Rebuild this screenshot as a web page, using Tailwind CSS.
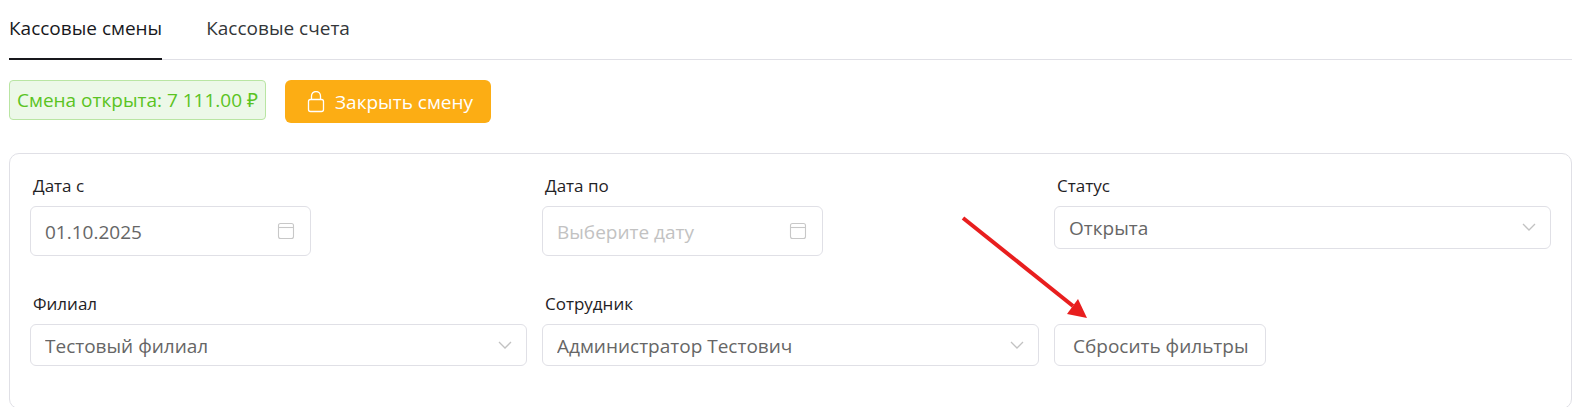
<!DOCTYPE html>
<html lang="ru">
<head>
<meta charset="utf-8">
<meta name="viewport" content="width=device-width, initial-scale=1">
<title>Кассовые смены</title>
<script src="https://cdn.jsdelivr.net/npm/@tailwindcss/browser@4"></script>
</head>
<body class="bg-white font-['Open_Sans','Noto_Sans',sans-serif] text-[19px] text-[#666]">
<main class="relative pl-[9px] pr-1.5">
  <nav class="flex h-[60px] gap-11 border-b border-[#e0e0e6]">
    <a href="#shifts" aria-current="page" class="-mb-px flex h-[60px] items-center border-b-2 border-[#18181c] pb-0.5 text-[#18181c]">Кассовые смены</a>
    <a href="#accounts" class="flex items-center pb-0.5 text-[#333639]">Кассовые счета</a>
  </nav>

  <div class="mt-5 flex items-start gap-[19px]">
    <div class="flex h-10 items-center rounded border border-[#b9e5a3] bg-[#ecf8e8] px-[7px] text-[#5ac322]">Смена открыта: 7 111.00 ₽</div>
    <button type="button" class="flex h-[43px] items-center gap-2.5 rounded-md bg-[#fcad14] pl-5 pr-[18px] pt-0.5 text-white">
      <svg class="h-6 w-5" viewBox="0 0 20 24" fill="none" stroke="currentColor" stroke-width="1.3"><rect x="3.5" y="8.5" width="15" height="12" rx="2"/><path d="M6.5 8.5V5a4.5 4.5 0 0 1 9 0v3.500"/></svg>
      Закрыть смену
    </button>
  </div>

  <form class="mt-[30px] grid min-h-64 grid-cols-3 content-start gap-x-[15px] rounded-[10px] border border-[#e0e0e6] px-5 pt-5">
    <div class="flex h-[118px] flex-col">
      <label for="from" class="h-8 pl-[3px] text-[17px] leading-6 text-[#1f2225]">Дата с</label>
      <div class="flex h-[50px] w-[281px] items-center rounded-md border border-[#e0e0e6] px-3.5">
        <input id="from" type="text" value="01.10.2025" class="min-w-0 flex-1 pt-0.5 outline-none">
        <svg class="size-5" viewBox="0 0 20 20" fill="none" stroke="#c8c8c8" stroke-width="1.1"><rect x="2.500" y="2.500" width="15" height="15" rx="2"/><path d="M2.500 6.500h15"/></svg>
      </div>
    </div>
    <div class="flex h-[118px] flex-col">
      <label for="to" class="h-8 pl-[3px] text-[17px] leading-6 text-[#1f2225]">Дата по</label>
      <div class="flex h-[50px] w-[281px] items-center rounded-md border border-[#e0e0e6] px-3.5">
        <input id="to" type="text" placeholder="Выберите дату" class="min-w-0 flex-1 pt-0.5 outline-none placeholder:text-[#c2c2c2]">
        <svg class="size-5" viewBox="0 0 20 20" fill="none" stroke="#c8c8c8" stroke-width="1.1"><rect x="2.500" y="2.500" width="15" height="15" rx="2"/><path d="M2.500 6.500h15"/></svg>
      </div>
    </div>
    <div class="flex h-[118px] flex-col">
      <label for="status" class="h-8 pl-[3px] text-[17px] leading-6 text-[#1f2225]">Статус</label>
      <div class="relative">
        <select id="status" class="h-[43px] w-full appearance-none rounded-md border border-[#e0e0e6] bg-white px-3.5 pt-0.5"><option>Открыта</option></select>
        <svg class="pointer-events-none absolute right-3.5 top-[13px] size-4" viewBox="0 0 16 16" fill="none" stroke="#c2c2c2" stroke-width="1.3"><path d="M2 5l6 6 6-6"/></svg>
      </div>
    </div>
    <div class="flex flex-col">
      <label for="branch" class="h-8 pl-[3px] text-[17px] leading-6 text-[#1f2225]">Филиал</label>
      <div class="relative">
        <select id="branch" class="h-[42px] w-full appearance-none rounded-md border border-[#e0e0e6] bg-white px-3.5 pt-0.5"><option>Тестовый филиал</option></select>
        <svg class="pointer-events-none absolute right-3.5 top-[13px] size-4" viewBox="0 0 16 16" fill="none" stroke="#c2c2c2" stroke-width="1.3"><path d="M2 5l6 6 6-6"/></svg>
      </div>
    </div>
    <div class="flex flex-col">
      <label for="employee" class="h-8 pl-[3px] text-[17px] leading-6 text-[#1f2225]">Сотрудник</label>
      <div class="relative">
        <select id="employee" class="h-[42px] w-full appearance-none rounded-md border border-[#e0e0e6] bg-white px-3.5 pt-0.5"><option>Администратор Тестович</option></select>
        <svg class="pointer-events-none absolute right-3.5 top-[13px] size-4" viewBox="0 0 16 16" fill="none" stroke="#c2c2c2" stroke-width="1.3"><path d="M2 5l6 6 6-6"/></svg>
      </div>
    </div>
    <div class="pt-8">
      <button type="reset" class="flex h-[42px] items-center rounded-md border border-[#e0e0e6] pl-[18px] pr-4 pt-0.5">Сбросить фильтры</button>
    </div>
  </form>

  <!-- Pointer to the reset button -->
  <svg class="pointer-events-none absolute left-[960px] top-[214px] h-[106px] w-[130px]" viewBox="0 0 130 106"><path d="M3 4L113 92" stroke="#e81e1e" stroke-width="4"/><path d="M127 104L107 100L118 85Z" fill="#e81e1e"/></svg>
</main>
</body>
</html>
